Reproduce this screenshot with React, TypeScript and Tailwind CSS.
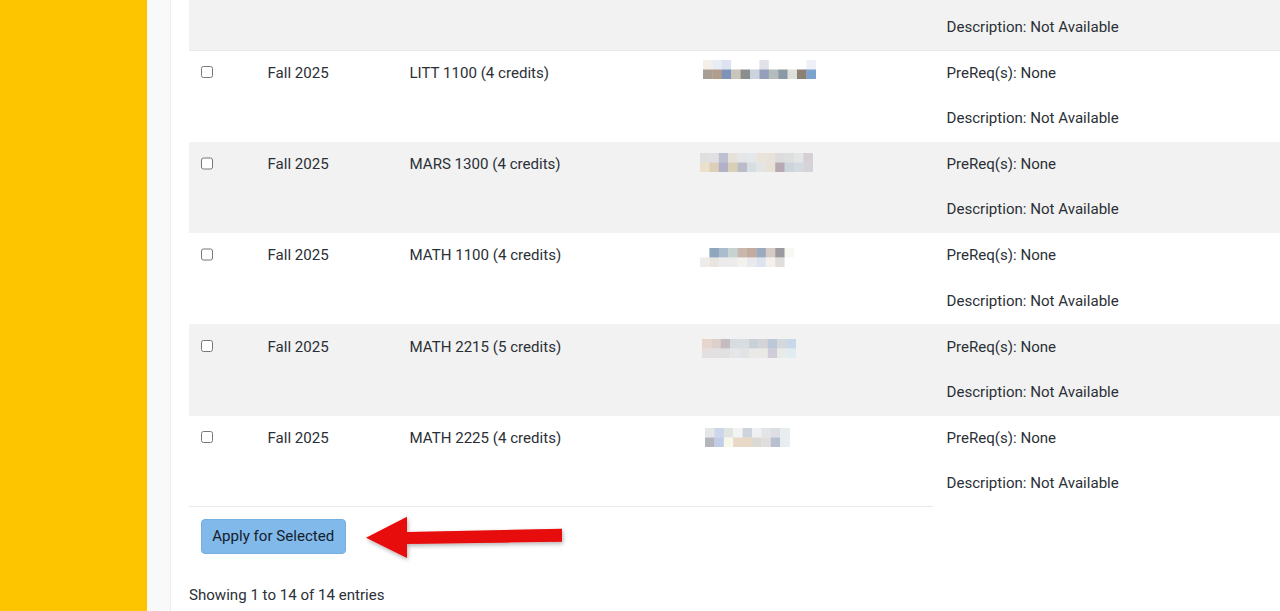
const PIXEL_W = 9.4;
const PIXEL_H = 9.5;

// Blurred instructor names, one entry per mosaic row
const mosaics: { left: number; top: number; rows: string[][] }[] = [
    {
        left: 3.8,
        top: 9.5,
        rows: [
            ["#f4efe8", "#e9ecf2", "#dde3f0", "#fff", "#fff", "#fff", "#e0e2e8", "#fff", "#fff", "#fff", "#fff", "#eef0f8"],
            ["#a79f94", "#b29c8c", "#7e93b9", "#c9c6b9", "#8a8f8d", "#cdd3dc", "#94a0bb", "#b6bcbb", "#8a9aa5", "#dde0d8", "#8c8073", "#7ba3cd"],
        ],
    },
    {
        left: 0.5,
        top: 11,
        rows: [
            ["#e0dfe0", "#e0e0e2", "#bcc0d0", "#e6e2da", "#e4e6e8", "#e4e8ea", "#e8e4dc", "#e8e2d8", "#dcdcdc", "#dee0e0", "#e4e6e6", "#d4d0d4"],
            ["#ebe0cc", "#dccfb8", "#b0b0c8", "#d8cfb4", "#bbbcca", "#d8dde2", "#e2e4e6", "#e8e2d6", "#b8a8b4", "#ccd4dc", "#d4dade", "#d4d4d8"],
        ],
    },
    {
        left: 0.5,
        top: 15,
        rows: [
            ["#fff", "#8fa6bf", "#abbccb", "#c8d2d0", "#c9b7ae", "#c2ab9f", "#9caabf", "#d5cbc4", "#9a9a9f", "#f8f8f2"],
            ["#eeece8", "#e8e4e2", "#ebebeb", "#ececec", "#f4f2ef", "#e8eaee", "#dde4ef", "#f4f1ec", "#e0dedc", "#fff"],
        ],
    },
    {
        left: 2,
        top: 15,
        rows: [
            ["#e6d6cc", "#dcd0ca", "#c4bcc0", "#d8dcdf", "#d8dde0", "#c8d0d8", "#d4d4d8", "#bcc8d8", "#d4d8da", "#c8d8e8"],
            ["#e2e0e0", "#e2e0e0", "#e2e0e0", "#e4e6e8", "#e0e4e6", "#ebe9e6", "#ebe9e6", "#d0ccd8", "#e8ece8", "#e0ecf0"],
        ],
    },
    {
        left: 5.5,
        top: 12,
        rows: [
            ["#e4e6e8", "#ccd6ea", "#e0e4e0", "#f2f4f4", "#cdd4dc", "#eef0f2", "#e2e4e8", "#dcdee4", "#e8edf0"],
            ["#b4b6bc", "#c0cce8", "#f8f8ea", "#e8d8c8", "#e8d8c8", "#dcd8d4", "#e0dedc", "#b8c0d0", "#e8eef0"],
        ],
    },
];

const courses = [
    "LITT 1100 (4 credits)",
    "MARS 1300 (4 credits)",
    "MATH 1100 (4 credits)",
    "MATH 2215 (5 credits)",
    "MATH 2225 (4 credits)",
];

const Mosaic = ({ index }: { index: number }) => {
    const { rows, left, top } = mosaics[index];
    return (
        <svg width={PIXEL_W * rows[0].length} height={PIXEL_H * 2} className="block" style={{ marginLeft: left, marginTop: top }}>
            {rows.map((cells, r) =>
                cells.map((fill, c) => (
                    <rect key={`${r}-${c}`} x={c * PIXEL_W} y={r * PIXEL_H} width={PIXEL_W + 0.3} height={PIXEL_H + 0.3} fill={fill} />
                ))
            )}
        </svg>
    );
};

const Arrow = () => (
    <svg width="210" height="60" viewBox="0 0 210 60" className="block overflow-visible">
        <defs>
            <filter id="arrowShadow" x="-10%" y="-30%" width="120%" height="170%">
                <feDropShadow dx="1" dy="2" stdDeviation="2" floodColor="#000" floodOpacity="0.3" />
            </filter>
        </defs>
        <path d="M1 22.7 L42 1.7 L42 17 L197 13.7 L197 26.7 L42 29 L42 43 Z" fill="#e80808" filter="url(#arrowShadow)" />
    </svg>
);

const App = () => {
    return (
        <div className="flex h-[611px] overflow-hidden bg-white font-['Roboto',sans-serif] text-[15.08px] leading-[22px] text-[#2b3036]">
            {/* Sidebar */}
            <div className="w-[147px] shrink-0 bg-[#fdc500]" />
            <div className="w-[24px] shrink-0 border-r border-[#eeeeee] bg-[#f9f9f9]" />

            {/* Main content */}
            <div className="min-w-0 flex-1 pl-[18px]">
                <div className="flex h-[50.5px] items-start border-b border-[#e9e9e9] bg-[#f2f2f2] pl-[757.5px] pt-[16px]">
                    Description: Not Available
                </div>

                {courses.map((course, i) => (
                    <div key={course} className={`flex h-[91.25px] ${i % 2 === 1 ? "bg-[#f2f2f2]" : "bg-white"}`}>
                        <div className={`flex w-[744px] shrink-0 ${i < 4 ? "" : "border-b border-[#e9e9e9]"}`}>
                            <div className="w-[78.5px] shrink-0 pl-[11.5px] pt-[15.3px]">
                                <input type="checkbox" className="block h-[12.5px] w-[12.5px]" />
                            </div>
                            <div className="w-[142px] shrink-0 pt-[11.3px]">Fall 2025</div>
                            <div className="w-[290px] shrink-0 pt-[11.3px]">{course}</div>
                            <div>
                                <Mosaic index={i} />
                            </div>
                        </div>
                        <div className="flex-1 pl-[13.5px] pt-[11.3px]">
                            <div>PreReq(s): None</div>
                            <div className="mt-[23.3px]">Description: Not Available</div>
                        </div>
                    </div>
                ))}

                <div className="flex items-start pl-[11.5px] pt-[12px]">
                    <button className="h-[35.5px] w-[145.5px] rounded-[4px] border border-[#74afe2] bg-[#80b9ea] pb-[1px] text-[#14202c]">
                        Apply for Selected
                    </button>
                    <div className="ml-[19px] -mt-[3.75px]">
                        <Arrow />
                    </div>
                </div>
                <div className="mt-[9px]">Showing 1 to 14 of 14 entries</div>
            </div>
        </div>
    );
};

export default App;
